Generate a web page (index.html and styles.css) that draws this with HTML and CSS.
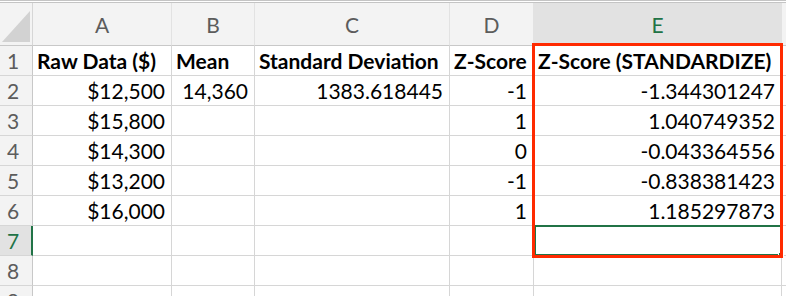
FILE: index.html
```html
<!DOCTYPE html>
<html lang="en">
<head>
    <meta charset="UTF-8">
    <title>Z-Score Sheet</title>
    <link rel="stylesheet" href="styles.css">
</head>
<body>
    <div class="sheet">
        <!-- Column headers -->
        <div class="corner"><span class="corner-tri"></span></div>
        <div class="col-head">A</div>
        <div class="col-head">B</div>
        <div class="col-head">C</div>
        <div class="col-head">D</div>
        <div class="col-head active">E</div>
        <div class="col-head"></div>

        <!-- Row 1 -->
        <div class="row-head">1</div>
        <div class="cell bold">Raw Data ($)</div>
        <div class="cell bold">Mean</div>
        <div class="cell bold">Standard Deviation</div>
        <div class="cell bold">Z-Score</div>
        <div class="cell bold">Z-Score (STANDARDIZE)</div>
        <div class="cell"></div>

        <!-- Row 2 -->
        <div class="row-head">2</div>
        <div class="cell num">$12,500</div>
        <div class="cell num">14,360</div>
        <div class="cell num">1383.618445</div>
        <div class="cell num">-1</div>
        <div class="cell num">-1.344301247</div>
        <div class="cell"></div>

        <!-- Row 3 -->
        <div class="row-head">3</div>
        <div class="cell num">$15,800</div>
        <div class="cell"></div>
        <div class="cell"></div>
        <div class="cell num">1</div>
        <div class="cell num">1.040749352</div>
        <div class="cell"></div>

        <!-- Row 4 -->
        <div class="row-head">4</div>
        <div class="cell num">$14,300</div>
        <div class="cell"></div>
        <div class="cell"></div>
        <div class="cell num">0</div>
        <div class="cell num">-0.043364556</div>
        <div class="cell"></div>

        <!-- Row 5 -->
        <div class="row-head">5</div>
        <div class="cell num">$13,200</div>
        <div class="cell"></div>
        <div class="cell"></div>
        <div class="cell num">-1</div>
        <div class="cell num">-0.838381423</div>
        <div class="cell"></div>

        <!-- Row 6 -->
        <div class="row-head">6</div>
        <div class="cell num">$16,000</div>
        <div class="cell"></div>
        <div class="cell"></div>
        <div class="cell num">1</div>
        <div class="cell num">1.185297873</div>
        <div class="cell"></div>

        <!-- Row 7 (active row) -->
        <div class="row-head active">7</div>
        <div class="cell"></div>
        <div class="cell"></div>
        <div class="cell"></div>
        <div class="cell"></div>
        <div class="cell selected"><span class="fill-handle"></span></div>
        <div class="cell"></div>

        <!-- Row 8 -->
        <div class="row-head">8</div>
        <div class="cell"></div>
        <div class="cell"></div>
        <div class="cell"></div>
        <div class="cell"></div>
        <div class="cell"></div>
        <div class="cell"></div>

        <!-- Row 9 -->
        <div class="row-head">9</div>
        <div class="cell"></div>
        <div class="cell"></div>
        <div class="cell"></div>
        <div class="cell"></div>
        <div class="cell"></div>
        <div class="cell"></div>

        <!-- Highlight frame around E1:E7, drawn over the cells -->
        <div class="highlight"></div>
    </div>
</body>
</html>
```

FILE: styles.css
```css
/* Sheet colors */
:root {
    --grid: #d6d6d6;
    --head-bg: #f3f3f3;
    --head-active: #e2e2e2;
    --head-text: #5c5c5c;
    --excel-green: #217346;
    --frame-red: #ff2a00;
}

* {
    margin: 0;
    padding: 0;
    box-sizing: border-box;
}

body {
    width: 786px;
    height: 296px;
    overflow: hidden;
    background: #fff;
    font-family: 'Lato', 'Liberation Sans', sans-serif;
    font-size: 21px;
    color: #000;
}

/* Grid of cells */
.sheet {
    position: relative;
    display: grid;
    grid-template-columns: 33px 139px 83px 195px 84px 248px 1fr;
    grid-template-rows: 43px repeat(9, 30px);
    border-top: 3px double #c4c4c4;
}

.corner,
.col-head,
.row-head {
    background: var(--head-bg);
    color: var(--head-text);
    border-right: 1px solid var(--grid);
    border-bottom: 1px solid var(--grid);
}

.corner {
    position: relative;
    border-bottom-color: #c8c8c8;
}

/* Little select-all triangle */
.corner-tri {
    position: absolute;
    right: 2px;
    bottom: 3px;
    width: 0;
    height: 0;
    border-left: 28px solid transparent;
    border-bottom: 31px solid #d2d2d2;
}

.col-head {
    display: flex;
    align-items: center;
    justify-content: center;
    border-right-color: #e2e2e2;
    border-bottom-color: #c8c8c8;
}

.row-head {
    display: flex;
    align-items: center;
    padding-left: 7px;
    border-right-color: #c8c8c8;
}

.col-head.active,
.row-head.active {
    background: var(--head-active);
    color: var(--excel-green);
}

.row-head.active {
    border-right: 2px solid var(--excel-green);
}

.cell {
    display: flex;
    align-items: center;
    padding: 0 5px;
    white-space: nowrap;
    border-right: 1px solid var(--grid);
    border-bottom: 1px solid var(--grid);
}

.cell.bold {
    font-weight: 700;
    padding-left: 4px;
}

.cell.num {
    justify-content: flex-end;
    padding-right: 6px;
}

/* Active cell E7 */
.cell.selected {
    position: relative;
    border: 2px solid var(--excel-green);
    margin-top: -1px;
}

.fill-handle {
    position: absolute;
    right: -4px;
    bottom: -4px;
    width: 6px;
    height: 6px;
    background: var(--excel-green);
    border: 1px solid #fff;
}

/* Red frame over E1:E7 */
.highlight {
    position: absolute;
    left: 532px;
    top: 40px;
    width: 251px;
    height: 215px;
    border: 3px solid var(--frame-red);
    pointer-events: none;
}
```
